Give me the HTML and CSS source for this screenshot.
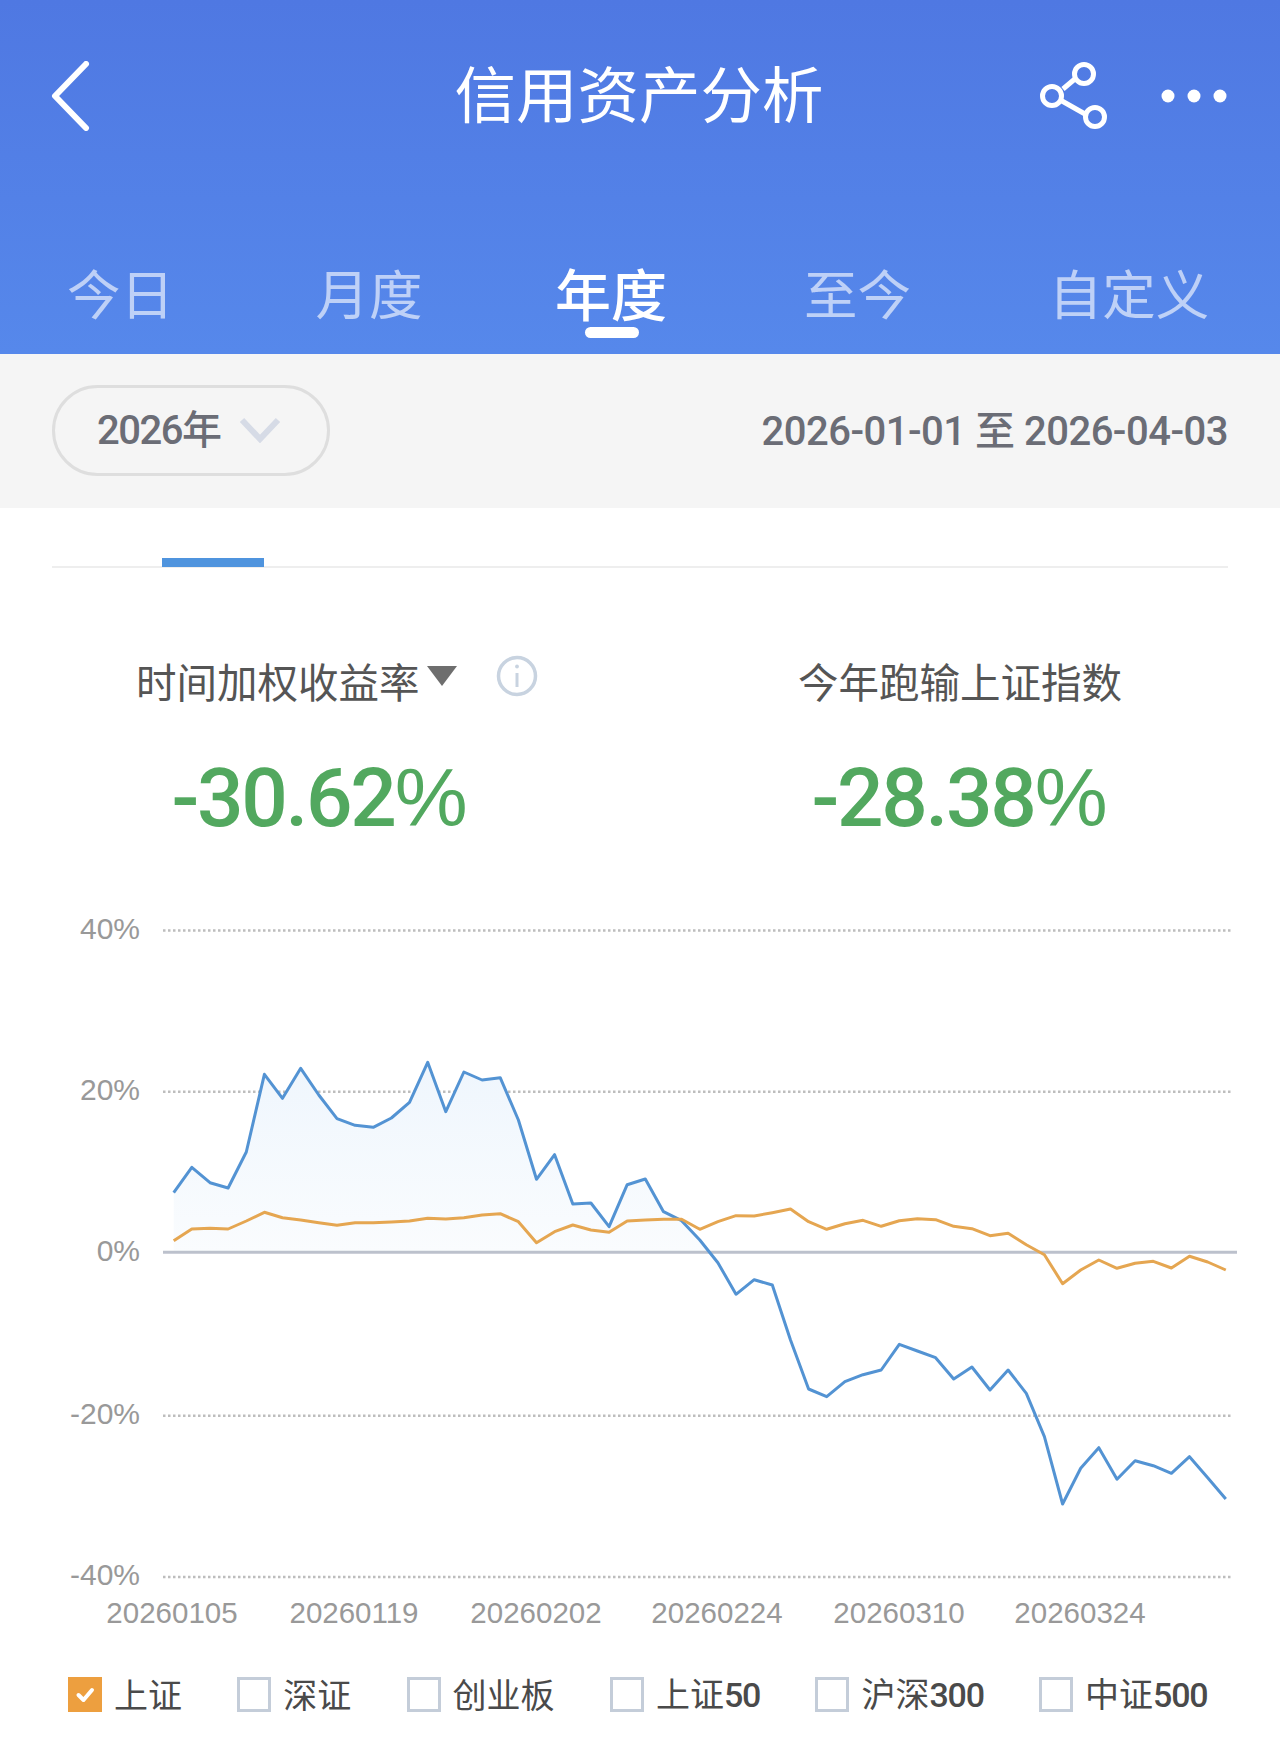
FILE: index.html
```html
<!DOCTYPE html>
<html lang="zh-CN">
<head>
<meta charset="utf-8">
<title>信用资产分析</title>
<link rel="stylesheet" href="styles.css">
</head>
<body>
<div class="page">
  <header class="appbar">
    <div class="nav">
      <svg class="back" viewBox="0 0 40 70" width="40" height="70"><path d="M36 3 L5 35 L36 67" /></svg>
      <h1 class="title">信用资产分析</h1>
      <div class="actions">
        <svg class="share" viewBox="0 0 70 68" width="70" height="68">
          <path d="M25 27 L38 16 M24 39 L47 52" />
          <circle cx="14" cy="34" r="9.500" />
          <circle cx="46" cy="12" r="9.500" />
          <circle cx="57" cy="55" r="9.500" />
        </svg>
        <svg class="dots" viewBox="0 0 66 14" width="66" height="14">
          <circle cx="7" cy="7" r="6.500" /><circle cx="33" cy="7" r="6.500" /><circle cx="59" cy="7" r="6.500" />
        </svg>
      </div>
    </div>
    <nav class="tabs">
      <span class="tab">今日</span>
      <span class="tab">月度</span>
      <span class="tab active">年度</span>
      <span class="tab">至今</span>
      <span class="tab">自定义</span>
    </nav>
  </header>

  <section class="filter">
    <div class="pill">
      <span class="pill-text">2026年</span>
      <svg class="chev" viewBox="0 0 42 26" width="42" height="26"><path d="M3 3 L21 22 L39 3" /></svg>
    </div>
    <div class="range">2026-01-01 至 2026-04-03</div>
  </section>

  <div class="subtabs"><span class="subtab-bar"></span></div>

  <section class="stats">
    <div class="stat">
      <div class="stat-label first">
        <span>时间加权收益率</span>
        <svg class="caret" viewBox="0 0 30 20" width="30" height="20"><path d="M0 0 H30 L15 20 Z" /></svg>
        <svg class="info" viewBox="0 0 42 42" width="42" height="42">
          <circle cx="21" cy="21" r="18.500" />
          <path d="M21 18 V32" /><circle class="info-dot" cx="21" cy="11.500" r="1.900" />
        </svg>
      </div>
      <div class="stat-value">-30.62<span class="pct">%</span></div>
    </div>
    <div class="stat">
      <div class="stat-label">今年跑输上证指数</div>
      <div class="stat-value">-28.38<span class="pct">%</span></div>
    </div>
  </section>

  <svg class="chart" viewBox="0 900 1280 740" width="1280" height="740">
    <defs>
      <linearGradient id="areaFill" x1="0" y1="0" x2="0" y2="1">
        <stop offset="0" stop-color="#eff6fd" />
        <stop offset="1" stop-color="#fafcfe" />
      </linearGradient>
    </defs>
    <g class="grid">
      <line x1="163" y1="930.5" x2="1233" y2="930.5" />
      <line x1="163" y1="1091.7" x2="1233" y2="1091.7" />
      <line x1="163" y1="1415.8" x2="1233" y2="1415.8" />
      <line x1="163" y1="1577" x2="1233" y2="1577" />
    </g>
    <polygon class="area" fill="url(#areaFill)" points="173.7,1192.7 191.8,1167.3 210,1182.7 228.1,1188 246.3,1152 264.4,1074.3 282.5,1098.3 300.7,1068.3 318.8,1095 337,1118.7 355.1,1125.3 373.2,1127.3 391.4,1118 409.5,1102.3 427.7,1062.3 445.8,1111.7 463.9,1072 482.1,1080 500.2,1077.7 518.4,1120 536.5,1179.3 554.6,1154.7 572.8,1204 590.9,1203 609.1,1226.7 627.2,1184.7 645.3,1179 663.5,1211.7 681.6,1220.7 699.8,1240 709.4,1252 173.7,1252" />
    <line class="axis" x1="163" y1="1252.3" x2="1237" y2="1252.3" />
    <polyline class="series blue" points="173.7,1192.7 191.8,1167.3 210,1182.7 228.1,1188 246.3,1152 264.4,1074.3 282.5,1098.3 300.7,1068.3 318.8,1095 337,1118.7 355.1,1125.3 373.2,1127.3 391.4,1118 409.5,1102.3 427.7,1062.3 445.8,1111.7 463.9,1072 482.1,1080 500.2,1077.7 518.4,1120 536.5,1179.3 554.6,1154.7 572.8,1204 590.9,1203 609.1,1226.7 627.2,1184.7 645.3,1179 663.5,1211.7 681.6,1220.7 699.8,1240 717.9,1262.7 736,1294.3 754.2,1279.7 772.3,1285 790.5,1340 808.6,1389 826.7,1396.7 844.9,1381.7 863,1374.7 881.2,1370 899.3,1344.3 917.4,1351 935.6,1357.7 953.7,1379 971.9,1367 990,1390 1008.1,1370 1026.3,1393.3 1044.4,1436.7 1062.6,1504 1080.7,1468.3 1098.8,1447.7 1117,1479.3 1135.1,1460.7 1153.3,1465.7 1171.4,1473.3 1189.5,1456.7 1207.7,1477.7 1225.8,1499" />
    <polyline class="series orange" points="173.7,1240.7 191.8,1229 210,1228.3 228.1,1229 246.3,1221 264.4,1212.3 282.5,1217.7 300.7,1220 318.8,1222.7 337,1225.3 355.1,1222.7 373.2,1222.7 391.4,1222 409.5,1221 427.7,1218.3 445.8,1219 463.9,1217.7 482.1,1215 500.2,1213.7 518.4,1221.7 536.5,1242.7 554.6,1231.7 572.8,1225 590.9,1230 609.1,1232.3 627.2,1221 645.3,1220 663.5,1219.3 681.6,1219.3 699.8,1229.3 717.9,1221.7 736,1215.7 754.2,1216 772.3,1212.7 790.5,1209 808.6,1221.7 826.7,1229.3 844.9,1223.7 863,1220.3 881.2,1226.3 899.3,1220.7 917.4,1218.7 935.6,1219.7 953.7,1226.3 971.9,1228.7 990,1235.7 1008.1,1233.3 1026.3,1244.7 1044.4,1254.7 1062.6,1283.7 1080.7,1270 1098.8,1260 1117,1268.3 1135.1,1263.3 1153.3,1261.3 1171.4,1268 1189.5,1256.3 1207.7,1262 1225.8,1270" />
    <g class="ylabels">
      <text x="140" y="938.5">40%</text>
      <text x="140" y="1099.5">20%</text>
      <text x="140" y="1260.5">0%</text>
      <text x="140" y="1423.5">-20%</text>
      <text x="140" y="1584.5">-40%</text>
    </g>
    <g class="xlabels">
      <text x="172" y="1623">20260105</text>
      <text x="354" y="1623">20260119</text>
      <text x="536" y="1623">20260202</text>
      <text x="717" y="1623">20260224</text>
      <text x="899" y="1623">20260310</text>
      <text x="1080" y="1623">20260324</text>
    </g>
  </svg>

  <ul class="legend">
    <li class="legend-item"><span class="box checked"><svg viewBox="0 0 34 35" width="34" height="35"><path d="M10.500 18 L15.500 23 L24 13" /></svg></span><span class="legend-text">上证</span></li>
    <li class="legend-item"><span class="box"></span><span class="legend-text">深证</span></li>
    <li class="legend-item"><span class="box"></span><span class="legend-text">创业板</span></li>
    <li class="legend-item"><span class="box"></span><span class="legend-text">上证<span class="num">50</span></span></li>
    <li class="legend-item"><span class="box"></span><span class="legend-text">沪深<span class="num">300</span></span></li>
    <li class="legend-item"><span class="box"></span><span class="legend-text">中证<span class="num">500</span></span></li>
  </ul>
</div>
</body>
</html>
```

FILE: styles.css
```css
* { box-sizing: border-box; }
html, body { margin: 0; padding: 0; background: #fff; }
body { font-family: "Noto Sans CJK SC", "Noto Sans", sans-serif; }
.page { width: 1280px; height: 1748px; overflow: hidden; background: #fff; }

.appbar { height: 354px; background: linear-gradient(180deg, #4f78e2 0%, #5688eb 100%); color: #fff; }
.nav { height: 192px; display: flex; align-items: center; padding: 0 53px 0 50px; }
.back { display: block; }
.back path { fill: none; stroke: #fff; stroke-width: 6; stroke-linecap: round; stroke-linejoin: round; }
.title { flex: 1; margin: -8px 0 0; padding-left: 150px; text-align: center; font-size: 61.500px; font-weight: 400; line-height: 1; }
.actions { display: flex; align-items: center; gap: 53px; }
.share path, .share circle { fill: none; stroke: #fff; stroke-width: 5; }
.dots circle { fill: #fff; }

.tabs { display: grid; grid-template-columns: 241px 256px 228px 265px 278px; height: 162px; }
.tab { position: relative; text-align: center; font-size: 53.500px; font-weight: 400; line-height: 76px; padding-top: 62px; color: rgba(255,255,255,.62); }
.tab.active { color: #fff; font-size: 56px; font-weight: 500; }
.tab.active::after { content: ""; position: absolute; left: 88px; top: 135px; width: 54px; height: 11px; border-radius: 6px; background: #fff; }

.filter { height: 154px; background: #f5f5f5; display: flex; align-items: center; justify-content: space-between; padding: 0 52px; }
.pill { width: 278px; height: 91px; margin-top: -2px; border: 3px solid #dedede; border-radius: 46px; display: flex; align-items: center; padding-left: 42px; gap: 19px; }
.pill-text, .range { font-family: Roboto, "Noto Sans CJK SC", sans-serif; font-size: 40px; font-weight: 500; color: #6b6d76; line-height: 1; margin-top: 2px; }
.pill-text { letter-spacing: -1.500px; }
.range { letter-spacing: -.5px; }
.chev path { fill: none; stroke: #d6dbe6; stroke-width: 6; }

.subtabs { height: 60px; margin: 0 52px; padding: 50px 0 0 110px; border-bottom: 2px solid #eeeeee; }
.subtab-bar { display: block; width: 102px; height: 9px; background: #4f94de; }

.stats { display: grid; grid-template-columns: 640px 640px; padding-top: 83px; }
.stat { text-align: center; }
.stat-label { font-size: 40.500px; font-weight: 400; color: #555; line-height: 60px; height: 60px; }
.stat-label.first { display: flex; align-items: center; padding-left: 136px; text-align: left; }
.caret { margin: -10px 0 0 7px; fill: #6e6e6e; }
.info { margin: -10px 0 0 39px; }
.info circle { fill: none; stroke: #c8d3e0; stroke-width: 3.500; }
.info path { stroke: #c8d3e0; stroke-width: 3; }
.info .info-dot { fill: #c8d3e0; stroke: none; }
.stat-value { font-family: Roboto, sans-serif; font-weight: 500; font-size: 82px; letter-spacing: -2.300px; color: #52a85f; line-height: 100px; margin-top: 37px; padding-right: 1px; }
.pct { font-family: "Liberation Sans", sans-serif; font-weight: 400; letter-spacing: 0; }

.chart { display: block; margin-top: 52px; }
.grid line { stroke: #bdbdbd; stroke-width: 2.500; stroke-dasharray: 2.500 2.500; }
.axis { stroke: #bcc1cc; stroke-width: 3; }
.area { stroke: none; }
.series { fill: none; stroke-width: 3; stroke-linejoin: round; }
.blue { stroke: #5393d3; }
.orange { stroke: #e5a651; }
.ylabels text { font-family: "Liberation Sans", sans-serif; font-size: 30px; fill: #999; text-anchor: end; }
.xlabels text { font-family: "Liberation Sans", sans-serif; font-size: 29.500px; fill: #999; text-anchor: middle; }

.legend { list-style: none; margin: 36px 0 0; padding: 0 0 0 68px; display: flex; gap: 55.300px; }
.legend-item { display: flex; align-items: center; gap: 12px; height: 36px; }
.box { width: 34px; height: 35px; border: 3px solid #c4cdd9; display: block; position: relative; }
.box svg { position: absolute; left: -3px; top: -3px; }
.box.checked { background: #ed9f3f; border-color: #ed9f3f; }
.box.checked path { fill: none; stroke: #fff; stroke-width: 4; stroke-linecap: round; stroke-linejoin: round; }
.legend-text { font-size: 34px; font-weight: 400; color: #4a4a4a; line-height: 36px; white-space: nowrap; }
.num { font-family: Roboto, sans-serif; font-weight: 500; letter-spacing: -1.200px; }
```
